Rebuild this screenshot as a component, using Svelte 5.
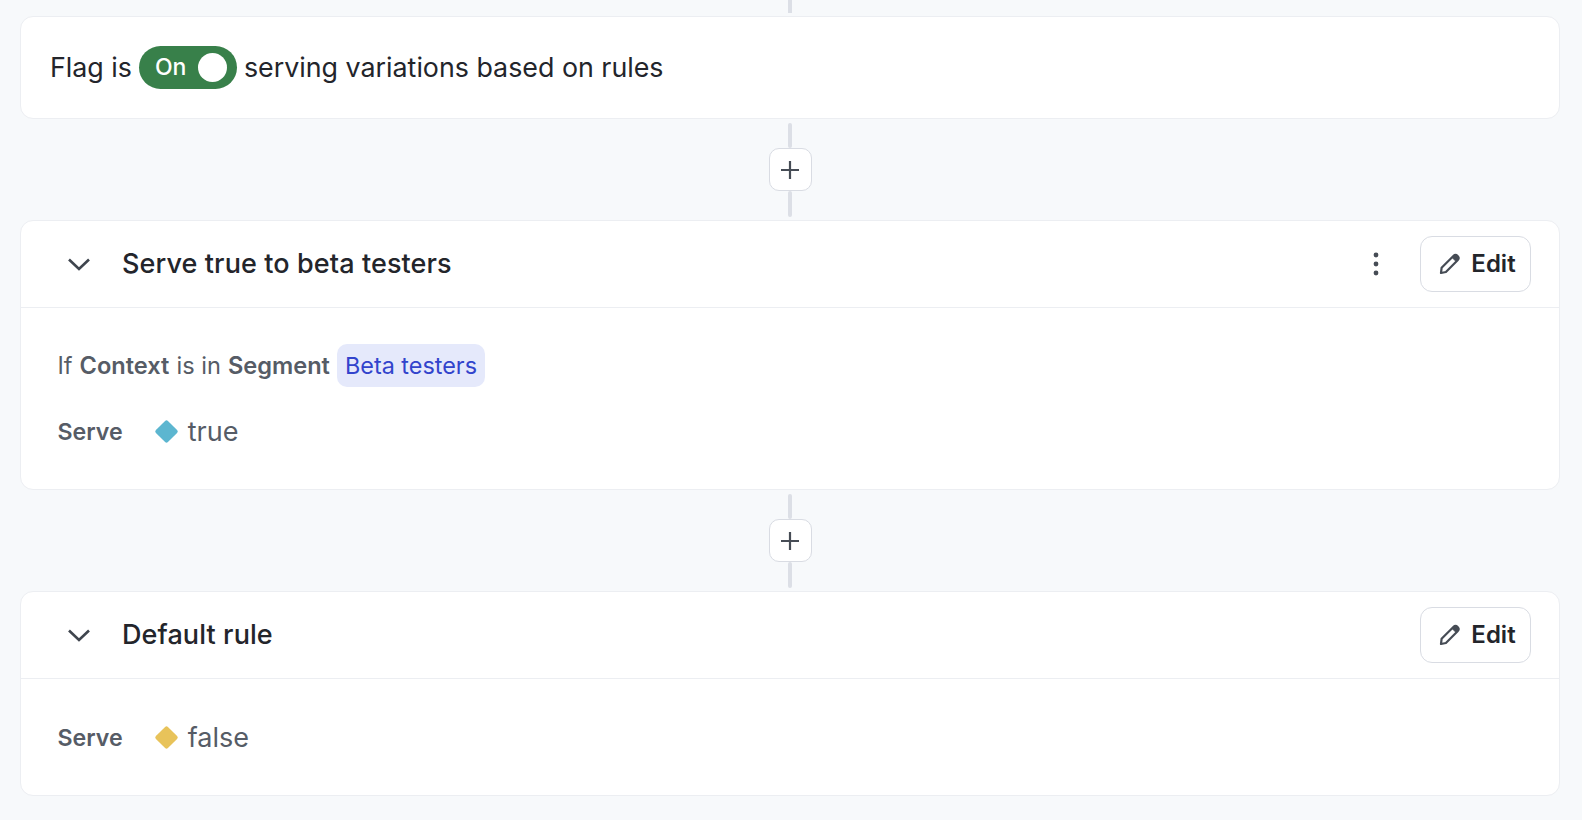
<script>
  const inter = 1;
</script>

<div class="page">
  <div class="stub"></div>
  <section class="card flag">
    <span class="lift">Flag is</span>
    <span class="toggle"><span class="on">On</span><span class="knob"></span></span>
    <span class="lift">serving variations based on rules</span>
  </section>

  {#snippet connector()}
    <div class="connector">
      <div class="line"></div>
      <button class="add" aria-label="Add rule">
        <svg width="20" height="20" viewBox="0 0 20 20"><path d="M10 1v18M1 10h18" stroke="#464c55" stroke-width="2.2" fill="none"/></svg>
      </button>
      <div class="line"></div>
    </div>
  {/snippet}

  {#snippet head(title, menu)}
    <header class="head">
      <svg class="chev" width="24" height="14" viewBox="0 0 24 14"><path d="M2 2.5l10 9.5 10-9.5" stroke="#3f454e" stroke-width="2.6" fill="none"/></svg>
      <h2>{title}</h2>
      {#if menu}
        <svg class="dots" width="6" height="24" viewBox="0 0 6 24"><circle cx="3" cy="3" r="2.4"/><circle cx="3" cy="12" r="2.4"/><circle cx="3" cy="21" r="2.4"/></svg>
      {/if}
      <button class="edit">
        <svg width="22" height="22" viewBox="0 0 22 22"><path d="M2 20l.6-5.2L14.4 3a2.9 2.9 0 0 1 4.2 4.2L6.9 19z" stroke="#464c55" stroke-width="2.2" fill="none" stroke-linejoin="round"/><path d="M14.4 3a2.9 2.9 0 0 1 4.2 4.2l-1.4 1.4-4.2-4.2z" fill="#464c55" stroke="#464c55" stroke-width="1"/></svg>
        <span class="lift">Edit</span>
      </button>
    </header>
  {/snippet}

  {@render connector()}

  <section class="card rule">
    {@render head("Serve true to beta testers", true)}
    <div class="body">
      <div class="cond">If <b>Context</b> is in <b>Segment</b> <span class="chip">Beta testers</span></div>
      <div class="serve"><b>Serve</b><i class="dia blue"></i><span class="val">true</span></div>
    </div>
  </section>

  {@render connector()}

  <section class="card rule last">
    {@render head("Default rule", false)}
    <div class="body">
      <div class="serve"><b>Serve</b><i class="dia yellow"></i><span class="val">false</span></div>
    </div>
  </section>
</div>

<style>
  :global(body) { margin: 0; background: #f7f9fb; }
  .page { height: 820px; box-sizing: border-box; padding: 0 22px 0 20px; font-family: Inter, "Liberation Sans", sans-serif; color: #23252b; overflow: hidden; }
  .stub { width: 4px; height: 13px; margin: 0 auto 3px; background: #dcdfe6; }
  .card { background: #fff; border: 1px solid #eceef2; border-radius: 13px; box-sizing: border-box; }
  .flag { height: 103px; display: flex; align-items: center; gap: 7px; padding-left: 29px; font-size: 26.8px; }
  .lift { padding-bottom: 2px; }
  .toggle { width: 98px; height: 43px; background: #38804a; border-radius: 22px; display: flex; align-items: center; justify-content: space-between; box-sizing: border-box; padding: 0 10px 0 16px; }
  .on { color: #fff; font-size: 23px; font-weight: 500; padding-bottom: 2px; }
  .knob { width: 29px; height: 29px; border-radius: 50%; background: #fff; }
  .connector { height: 101px; display: flex; flex-direction: column; align-items: center; padding: 4px 0 3px; box-sizing: border-box; }
  .line { width: 4px; background: #dcdfe6; border-radius: 2px; }
  .line:first-child { flex: 25; }
  .line:last-child { flex: 26; }
  .add { width: 43px; height: 43px; padding: 0; display: flex; align-items: center; justify-content: center; background: #fff; border: 1px solid #d9dce3; border-radius: 10px; }
  .rule { height: 270px; }
  .rule.last { height: 205px; }
  .head { height: 87px; border-bottom: 1px solid #eceef2; display: flex; align-items: center; padding: 0 28px 0 46px; box-sizing: border-box; }
  .chev { flex: none; }
  h2 { margin: 0 0 0 31px; padding-bottom: 2px; font-size: 27px; font-weight: 500; flex: 1; letter-spacing: 0.1px; }
  .dots { fill: #464c55; margin-right: 41px; }
  .edit { width: 111px; height: 56px; display: flex; align-items: center; justify-content: center; gap: 10px; background: #fff; border: 1px solid #d9dce3; border-radius: 12px; font: 600 24px Inter, sans-serif; color: #23252b; padding: 0 0 0 4px; }
  .body { padding: 36px 36.5px; color: #565c66; }
  .cond { font-size: 23.6px; height: 43px; display: flex; align-items: center; gap: 7px; margin-bottom: 24px; }
  b { font-weight: 600; }
  .chip { background: #e5e9fb; color: #3244cc; border-radius: 10px; height: 43px; font-size: 23.4px; display: inline-flex; align-items: center; padding: 0 8px; }
  .serve { display: flex; align-items: center; font-size: 23.2px; height: 40px; }
  .serve b { padding-top: 2px; }
  .dia { width: 17px; height: 17px; transform: rotate(45deg); border-radius: 2px; margin: 0 12.5px 0 35.5px; }
  .blue { background: #5cb6d0; }
  .yellow { background: #e8c35a; }
  .val { font-size: 27px; }
  .last .body { padding-top: 38px; }
</style>
